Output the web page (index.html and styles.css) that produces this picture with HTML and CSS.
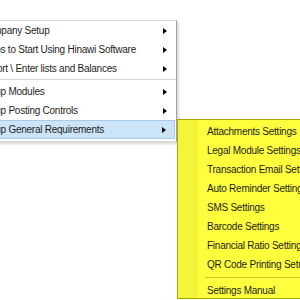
FILE: index.html
```html
<!DOCTYPE html>
<html lang="en">
<head>
    <meta charset="UTF-8">
    <meta name="viewport" content="width=device-width, initial-scale=1.0">
    <title>Setup Menu</title>
    <link rel="stylesheet" href="styles.css">
</head>
<body>
    <div class="menu main-menu">
        <div class="item"><span class="label">Company Setup</span><span class="arrow"></span></div>
        <div class="item"><span class="label">Steps to Start Using Hinawi Software</span><span class="arrow"></span></div>
        <div class="item"><span class="label">Import \ Enter lists and Balances</span><span class="arrow"></span></div>
        <div class="separator"></div>
        <div class="item"><span class="label">Setup Modules</span><span class="arrow"></span></div>
        <div class="item"><span class="label">Setup Posting Controls</span><span class="arrow"></span></div>
        <div class="item active"><span class="label">Setup General Requirements</span><span class="arrow"></span></div>
    </div>

    <div class="menu sub-menu">
        <div class="gutter"></div>
        <div class="item">Attachments Settings</div>
        <div class="item">Legal Module Settings</div>
        <div class="item">Transaction Email Settings</div>
        <div class="item">Auto Reminder Settings</div>
        <div class="item">SMS Settings</div>
        <div class="item">Barcode Settings</div>
        <div class="item">Financial Ratio Settings</div>
        <div class="item">QR Code Printing Setup</div>
        <div class="separator"></div>
        <div class="item">Settings Manual</div>
    </div>
</body>
</html>
```

FILE: styles.css
```css
body {
    margin: 0;
    padding: 0;
    width: 300px;
    height: 300px;
    overflow: hidden;
    position: relative;
    background-color: #fff;
    font-family: 'Liberation Sans', Arial, sans-serif;
    font-size: 10px;
    letter-spacing: -0.25px;
    color: #1e1e1e;
}
.menu {
    position: absolute;
    box-sizing: border-box;
}
.main-menu {
    left: -49px;
    top: 20px;
    width: 226px;
    background-color: #fff;
    border: 1px solid #d7d7d7;
    border-right-color: #a0a0a0;
    box-shadow: 2px 2px 2px rgba(0, 0, 0, 0.15);
    padding-bottom: 2px;
}
.main-menu .item {
    display: flex;
    align-items: center;
    justify-content: space-between;
    height: 19px;
    padding: 0 9px 0 29px;
    box-sizing: border-box;
    white-space: nowrap;
}
.main-menu .item.active {
    background-color: #cce4f7;
    border: 1px solid #a6cbef;
    margin-right: 1px;
    padding-left: 28px;
    padding-right: 8px;
}
.arrow {
    width: 0;
    height: 0;
    border-top: 3.5px solid transparent;
    border-bottom: 3.5px solid transparent;
    border-left: 4px solid #000;
}
.main-menu .separator {
    height: 1px;
    margin: 1px 0 2px 0;
    background-color: #d7d7d7;
}
.sub-menu {
    left: 177px;
    top: 119px;
    width: 150px;
    height: 180px;
    background-color: #ffff3e;
    border: 1px solid #a8a800;
    padding: 2px 0 0 0;
}
.sub-menu .gutter {
    position: absolute;
    left: 0;
    top: 0;
    bottom: 0;
    width: 20px;
    background-color: #f4f438;
}
.sub-menu .item {
    position: relative;
    height: 19px;
    line-height: 19px;
    padding-left: 29px;
    white-space: nowrap;
}
.sub-menu .separator {
    position: relative;
    height: 1px;
    margin: 3px 0 3px 27px;
    background-color: #c8c830;
}
```
